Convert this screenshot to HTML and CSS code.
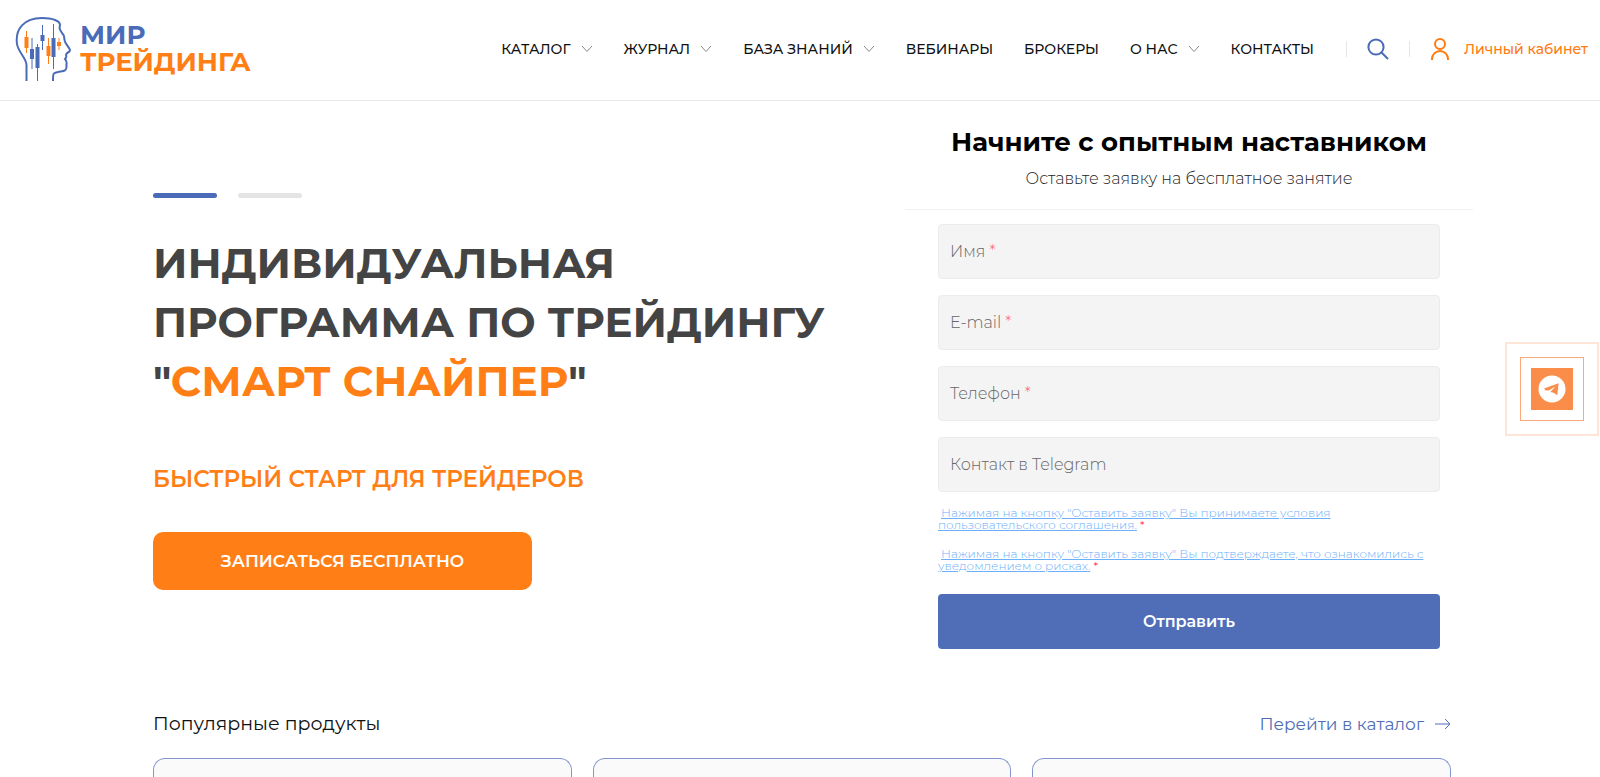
FILE: index.html
```html
<!DOCTYPE html>
<html lang="ru">
<head>
<meta charset="utf-8">
<meta name="viewport" content="width=device-width, initial-scale=1">
<title>Мир трейдинга</title>
<link rel="stylesheet" href="styles.css">
</head>
<body>
<header class="header">
  <a class="logo" href="#">
    <svg class="logo-mark" viewBox="0 0 56 66" aria-hidden="true">
      <path class="logo-head" d="M11.5 65V49C11.5 42 3 36 2 28C0 13 9 2 27 2C38 2 45 5 45 9C44 13 45 14 47 17C50 20 49 21 49.500 24C50 28 54 31 55 34C55 37 51 36 51 39C52 41 51 42 50 43C53 46 51 48 51.500 50C52 56 47 55 43 56C38 57 38 57 38 65"/>
      <path class="logo-blue" d="M17 22V53M22.500 28V65M27.500 9V34M38.500 8V53"/>
      <path class="logo-blue-fill" d="M15 33h4v10h-4zM20.500 31h4v21h-4zM25.500 19h4v6h-4zM36.500 22h4v19h-4z"/>
      <path class="logo-orange" d="M11.500 15V37M33.500 22V48M44 22V34"/>
      <path class="logo-orange-fill" d="M9.500 21h4v11h-4zM31.500 30h4v10h-4zM42 26h4v4h-4z"/>
    </svg>
    <span class="logo-text"><span class="logo-top">МИР</span><span class="logo-bottom">ТРЕЙДИНГА</span></span>
  </a>
  <nav class="nav">
    <a href="#">КАТАЛОГ<svg class="chevron" viewBox="0 0 12 8"><path d="M1 1l5 5.500L11 1"/></svg></a>
    <a href="#">ЖУРНАЛ<svg class="chevron" viewBox="0 0 12 8"><path d="M1 1l5 5.500L11 1"/></svg></a>
    <a href="#">БАЗА ЗНАНИЙ<svg class="chevron" viewBox="0 0 12 8"><path d="M1 1l5 5.500L11 1"/></svg></a>
    <a href="#">ВЕБИНАРЫ</a>
    <a href="#">БРОКЕРЫ</a>
    <a href="#">О НАС<svg class="chevron" viewBox="0 0 12 8"><path d="M1 1l5 5.500L11 1"/></svg></a>
    <a href="#">КОНТАКТЫ</a>
  </nav>
  <div class="tools">
    <button class="search" type="button" aria-label="Поиск">
      <svg viewBox="0 0 22 22"><circle cx="9" cy="9" r="7.600"/><path d="M14.500 14.500L21 21"/></svg>
    </button>
    <a class="account" href="#">
      <svg viewBox="0 0 18 22"><circle cx="9" cy="6" r="5"/><path d="M1 22v-1a8 8 0 0 1 16 0v1"/></svg>
      Личный кабинет
    </a>
  </div>
</header>

<main class="main">
  <section class="hero">
    <div class="pitch">
      <div class="slides"><button class="slide slide-active" type="button" aria-label="Слайд 1"></button><button class="slide" type="button" aria-label="Слайд 2"></button></div>
      <h1>ИНДИВИДУАЛЬНАЯ<br>ПРОГРАММА ПО ТРЕЙДИНГУ<br>"<span class="accent">СМАРТ СНАЙПЕР</span>"</h1>
      <p class="tagline">БЫСТРЫЙ СТАРТ ДЛЯ ТРЕЙДЕРОВ</p>
      <a class="cta" href="#">ЗАПИСАТЬСЯ БЕСПЛАТНО</a>
    </div>
    <form class="form">
      <div class="form-head">
        <h2>Начните с опытным наставником</h2>
        <p>Оставьте заявку на бесплатное занятие</p>
      </div>
      <div class="form-body">
        <label class="field"><span>Имя <span class="star">*</span></span><input type="text" name="name"></label>
        <label class="field"><span>E-mail <span class="star">*</span></span><input type="email" name="email"></label>
        <label class="field"><span>Телефон <span class="star">*</span></span><input type="tel" name="phone"></label>
        <label class="field"><span>Контакт в Telegram</span><input type="text" name="telegram"></label>
        <div class="terms">
          <p>&nbsp;<a href="#">Нажимая на кнопку "Оставить заявку" Вы принимаете условия<br>пользовательского соглашения.</a> <span class="required">*</span></p>
          <p>&nbsp;<a href="#">Нажимая на кнопку "Оставить заявку" Вы подтверждаете, что ознакомились с<br>уведомлением о рисках.</a> <span class="required">*</span></p>
        </div>
        <button class="submit" type="submit">Отправить</button>
      </div>
    </form>
  </section>

  <section class="products">
    <div class="products-head">
      <h3>Популярные продукты</h3>
      <a href="#">Перейти в каталог<svg viewBox="0 0 16 12"><path d="M0 6h15M10 1l5 5-5 5"/></svg></a>
    </div>
    <div class="cards"><article class="card"></article><article class="card"></article><article class="card"></article></div>
  </section>
</main>

<a class="telegram" href="#" aria-label="Telegram">
  <span class="telegram-ring"><span class="telegram-tile">
    <svg viewBox="0 0 28 28"><circle cx="14" cy="14" r="13.500" fill="#fff"/><path d="M6.500 13.300L20.600 8.200L19.300 20.200L15.600 17.800L12.300 16.900L17.500 11.500L10.800 15.400L6.800 15.200Z" fill="#fa8d4a"/></svg>
  </span></span>
</a>
</body>
</html>
```
FILE: styles.css
```css
* { box-sizing: border-box; }
body {
  margin: 0;
  height: 100vh;
  display: flex;
  flex-direction: column;
  overflow: hidden;
  background: #fff;
  color: #111;
  font-family: Montserrat, Inter, "Open Sans", sans-serif;
}
h1, h2, h3, p { margin: 0; }
a { color: inherit; text-decoration: none; }
button { border: 0; padding: 0; background: none; font: inherit; cursor: pointer; }
svg { display: block; fill: none; }

.header {
  display: flex;
  align-items: center;
  min-height: 101px;
  padding: 0 12px 2px 15px;
  border-bottom: 1px solid #e8e8e8;
}
.logo { display: flex; align-items: center; gap: 9px; }
.logo-mark { width: 56px; height: 66px; }
.logo-head, .logo-blue { stroke: #4a6bb7; }
.logo-head { stroke-width: 2; }
.logo-blue, .logo-orange { stroke-width: 1; }
.logo-blue-fill { fill: #4a6bb7; }
.logo-orange { stroke: #ff7f16; }
.logo-orange-fill { fill: #ff7f16; }
.logo-text { display: flex; flex-direction: column; font-size: 26px; font-weight: 700; line-height: 27px; }
.logo-top { color: #4a6bb7; }
.logo-bottom { color: #ff7f16; }

.nav { display: flex; gap: 31px; margin-left: auto; font-size: 14px; font-weight: 500; }
.nav a { display: flex; align-items: center; gap: 10px; white-space: nowrap; }
.chevron { width: 12px; height: 8px; stroke: #8a8a8a; }

.tools { display: flex; align-items: center; margin-left: 32px; }
.search, .account { border-left: 1px solid #e5e5e5; height: 16px; display: flex; align-items: center; }
.search { padding: 0 20px; }
.search svg { width: 22px; height: 22px; stroke: #4a6bb7; stroke-width: 2; }
.account { padding-left: 21px; gap: 15px; color: #ff7a0f; font-size: 14px; font-weight: 500; white-space: nowrap; }
.account svg { width: 18px; height: 22px; stroke: #ff7a0f; stroke-width: 2; }

.main {
  flex: 1;
  min-height: 0;
  display: flex;
  flex-direction: column;
  width: 100%;
  max-width: 1346px;
  margin: 0 auto;
  padding: 0 22px 0 26px;
}
.hero { display: flex; justify-content: space-between; }
.pitch { padding-top: 92px; }
.slides { display: flex; gap: 21px; }
.slide { width: 64px; height: 5px; border-radius: 3px; background: #e4e4e4; }
.slide-active { background: #4a6bb7; }
h1 { margin-top: 36px; font-size: 42px; font-weight: 700; line-height: 59px; color: #444; }
.accent { color: #ff7f16; }
.tagline { margin-top: 52px; font-size: 23px; font-weight: 600; line-height: 32px; color: #ff7f16; }
.cta {
  display: flex;
  align-items: center;
  justify-content: center;
  width: 379px;
  height: 58px;
  margin-top: 37px;
  border-radius: 10px;
  background: #ff7f16;
  color: #fff;
  font-size: 17px;
  font-weight: 600;
}

.form { width: 568px; margin-right: -22px; }
.form-head { padding: 23px 0 18px; border-bottom: 1px solid #f2f2f2; text-align: center; }
h2 { font-size: 26px; font-weight: 700; line-height: 36px; color: #000; }
.form-head p { margin-top: 7px; font-size: 16px; font-weight: 300; line-height: 24px; color: #222; }
.form-body { display: flex; flex-direction: column; gap: 16px; padding: 14px 33px 0; }
.field {
  display: flex;
  align-items: center;
  height: 55px;
  padding: 0 11px;
  border: 1px solid #ececec;
  border-radius: 4px;
  background: #f4f4f4;
  color: #666;
  font-size: 16px;
  font-weight: 300;
}
.field input { flex: 1; min-width: 0; border: 0; outline: 0; background: transparent; font: inherit; }
.star { color: #ff6c6c; }
.terms { display: flex; flex-direction: column; gap: 17px; margin-top: -1px; padding-bottom: 6px; font-size: 12px; font-weight: 300; line-height: 12px; color: #6cb0fa; }
.terms a { text-decoration: underline; }
.required { color: #f00; }
.submit { height: 55px; border-radius: 4px; background: #4f6eb7; color: #fff; font-size: 16px; font-weight: 600; }

.products { flex: 1; display: flex; flex-direction: column; margin-top: 59px; }
.products-head { display: flex; justify-content: space-between; align-items: center; line-height: 32px; }
h3 { font-size: 19px; font-weight: 400; }
.products-head a { display: flex; align-items: center; gap: 11px; color: #4f6eb7; font-size: 17px; font-weight: 400; }
.products-head svg { width: 16px; height: 12px; stroke: #4f6eb7; }
.cards { flex: 1; display: grid; grid-template-columns: repeat(3, 1fr); gap: 21px; margin-top: 18px; }
.card { border: 1px solid #8294cd; border-bottom: 0; border-radius: 12px 12px 0 0; background: #fafafa; }

.telegram { position: fixed; right: 1px; top: 342px; width: 94px; height: 94px; padding: 13px; border: 2px solid #fee5d8; }
.telegram-ring { display: flex; align-items: center; justify-content: center; height: 100%; border: 1px solid #fba97b; }
.telegram-tile { display: flex; align-items: center; justify-content: center; width: 42px; height: 42px; background: #fa8d4a; }
.telegram-tile svg { width: 28px; height: 28px; }
```
